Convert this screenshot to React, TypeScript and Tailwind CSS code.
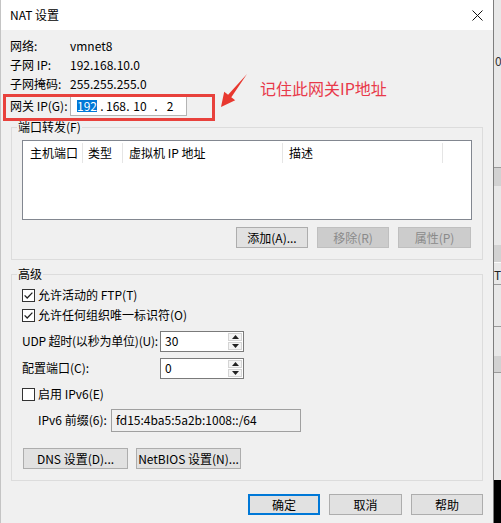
import React from 'react';

function CheckBox({ checked }: { checked?: boolean }) {
  return (
    <svg width="13" height="13" viewBox="0 0 13 13" className="shrink-0">
      <rect x="0.5" y="0.5" width="12" height="12" fill="#fff" stroke="#333" />
      {checked && <path d="M2.6 6.4 L5.2 9 L10.4 3.6" fill="none" stroke="#222" strokeWidth="1.3" />}
    </svg>
  );
}

function WinButton({ label, w, disabled, primary }: { label: string; w: string; disabled?: boolean; primary?: boolean }) {
  const base = 'h-[21px] flex items-center justify-center shrink-0 border whitespace-nowrap';
  const look = disabled
    ? 'bg-[#cccccc] border-[#bfbfbf] text-[#8a8a8a]'
    : primary
      ? 'bg-[#e1e1e1] border-[#0078d7] shadow-[inset_0_0_0_1px_#0078d7]'
      : 'bg-[#e1e1e1] border-[#adadad]';
  return <div className={`${base} ${look} ${w}`}>{label}</div>;
}

function SpinBox({ value }: { value: string }) {
  return (
    <div className="w-[84px] h-[21px] shrink-0 bg-white border border-[#7a7a7a] flex items-stretch">
      <div className="flex-1 pl-[4px] flex items-center">{value}</div>
      <div className="w-[14px] mr-[1px] py-[1px] flex flex-col gap-[1px]">
        <div className="flex-1 border border-[#d4d4d4] bg-[#f4f4f4] flex items-center justify-center">
          <svg width="7" height="4" viewBox="0 0 7 4"><path d="M0 4 L3.5 0 L7 4Z" fill="#222" /></svg>
        </div>
        <div className="flex-1 border border-[#d4d4d4] bg-[#f4f4f4] flex items-center justify-center">
          <svg width="7" height="4" viewBox="0 0 7 4"><path d="M0 0 L3.5 4 L7 0Z" fill="#222" /></svg>
        </div>
      </div>
    </div>
  );
}

function InfoRow({ label, value }: { label: string; value: string }) {
  return (
    <div className="h-[19px] flex items-center">
      <div className="w-[60px]">{label}</div>
      <div>{value}</div>
    </div>
  );
}

export default function App() {
  return (
    <div className="w-[501px] h-[523px] flex overflow-hidden bg-[#f0f0f0] text-black text-[12px] leading-[16px] font-['Noto_Sans_CJK_SC',sans-serif]">
      <div className="w-[493px] h-full flex flex-col border-l border-[#c4c4c4]">
        {/* title bar */}
        <div className="h-[30px] bg-white flex items-center justify-between pl-[9px] pr-[10px] shrink-0">
          <div>NAT 设置</div>
          <svg width="11" height="11" viewBox="0 0 11 11">
            <path d="M0.5 0.5 L10.5 10.5 M10.5 0.5 L0.5 10.5" stroke="#111" strokeWidth="1" />
          </svg>
        </div>

        <div className="pt-[6px] pl-[9px] flex flex-col">
          <InfoRow label="网络:" value="vmnet8" />
          <InfoRow label="子网 IP:" value="192.168.10.0" />
          <InfoRow label="子网掩码:" value="255.255.255.0" />

          {/* gateway row */}
          <div className="h-[26px] flex items-center relative">
            <div className="w-[60px] whitespace-nowrap">网关 IP(G):</div>
            <div className="w-[117px] h-[20px] bg-white border border-[#b4b4b4] flex items-center pl-[6px]">
              <span className="w-[20px] text-center bg-[#0078d7] text-white leading-[12px]">192</span>
              <span className="ml-[2px] w-[6px] text-center">.</span>
              <span className="ml-[1px] w-[16px] text-center">168</span>
              <span className="ml-[3px] w-[6px] text-center">.</span>
              <span className="ml-[1px] w-[16px] text-center">10</span>
              <span className="ml-[5px] w-[6px] text-center">.</span>
              <span className="ml-[5px] w-[12px] text-center">2</span>
            </div>
            {/* annotation overlays */}
            <div className="absolute left-[-7px] top-[1px] w-[212px] h-[27px] border-[3px] border-[#e8413c] pointer-events-none" />
            <svg className="absolute left-[205px] top-[-25px]" width="40" height="42" viewBox="0 0 40 42">
              <polygon points="32,6 16.3,29.2 20.2,32.3 6,39 9.2,23.7 13.1,26.8" fill="#e8382f" />
            </svg>
            <div className="absolute left-[250px] top-[-14px] text-[16px] leading-[18px] text-[#e8394a] whitespace-nowrap">
              记住此网关IP地址
            </div>
          </div>

          {/* port forwarding */}
          <fieldset className="ml-[1px] w-[472px] border border-[#dcdcdc] pb-[11px]">
            <legend className="ml-[5px] px-[1px]">端口转发(F)</legend>
            <div className="mt-[5px] ml-[10px] w-[450px] h-[80px] bg-white border border-[#828790]">
              <div className="h-[24px] flex items-stretch">
                <div className="w-[60px] pl-[7px] flex items-center border-r border-[#e5e5e5] my-[2px]">主机端口</div>
                <div className="w-[40px] pl-[5px] flex items-center border-r border-[#e5e5e5] my-[2px]">类型</div>
                <div className="w-[160px] pl-[6px] flex items-center border-r border-[#e5e5e5] my-[2px]">虚拟机 IP 地址</div>
                <div className="w-[160px] pl-[6px] flex items-center border-r border-[#e5e5e5] my-[2px]">描述</div>
              </div>
            </div>
            <div className="mt-[7px] flex justify-end gap-[9px] pr-[11px]">
              <WinButton label="添加(A)..." w="w-[72px]" />
              <WinButton label="移除(R)" w="w-[72px]" disabled />
              <WinButton label="属性(P)" w="w-[73px]" disabled />
            </div>
          </fieldset>

          {/* advanced */}
          <fieldset className="mt-[6px] ml-[1px] w-[472px] border border-[#dcdcdc] pb-[11px] pl-[10px]">
            <legend className="ml-[-5px] px-[1px]">高级</legend>
            <div className="mt-[3px] h-[20px] flex items-center gap-[3px]">
              <CheckBox checked />
              <span>允许活动的 FTP(T)</span>
            </div>
            <div className="h-[20px] flex items-center gap-[3px]">
              <CheckBox checked />
              <span>允许任何组织唯一标识符(O)</span>
            </div>
            <div className="mt-[5px] h-[22px] flex items-center">
              <div className="w-[138px] shrink-0 whitespace-nowrap tracking-[-0.2px]">UDP 超时(以秒为单位)(U):</div>
              <SpinBox value="30" />
            </div>
            <div className="mt-[5px] h-[22px] flex items-center">
              <div className="w-[138px] shrink-0 whitespace-nowrap">配置端口(C):</div>
              <SpinBox value="0" />
            </div>
            <div className="mt-[5px] h-[20px] flex items-center gap-[3px]">
              <CheckBox />
              <span>启用 IPv6(E)</span>
            </div>
            <div className="mt-[5px] h-[22px] flex items-center pl-[16px]">
              <div className="w-[73px] shrink-0 whitespace-nowrap">IPv6 前缀(6):</div>
              <div className="w-[190px] h-[23px] border border-[#a0a0a0] flex items-center pl-[4px]">
                fd15:4ba5:5a2b:1008::/64
              </div>
            </div>
            <div className="mt-[17px] flex gap-[8px] pl-[1px]">
              <WinButton label="DNS 设置(D)..." w="w-[105px]" />
              <WinButton label="NetBIOS 设置(N)..." w="w-[105px]" />
            </div>
          </fieldset>

          {/* dialog buttons */}
          <div className="mt-[13px] flex justify-end gap-[9px] w-[473px]">
            <WinButton label="确定" w="w-[72px]" primary />
            <WinButton label="取消" w="w-[73px]" />
            <WinButton label="帮助" w="w-[72px]" />
          </div>
        </div>
      </div>

      {/* window behind, visible at the right edge */}
      <div className="w-[8px] h-full border-l border-[#7d7d7d] bg-[#e8e8e8] flex flex-col">
        <div className="mt-[55px] h-[12px] text-[12px] leading-[12px] text-[#333] pl-[1px]">0</div>
        <div className="mt-[100px] h-[1px] bg-[#9a9a9a]" />
        <div className="h-[18px] bg-[#d2d2d2]" />
        <div className="mt-[59px] h-[17px] bg-[#d2d2d2]" />
        <div className="h-[1px] bg-[#fafafa]" />
        <div className="mt-[5px] h-[14px] text-[12px] leading-[14px] text-[#222]">T</div>
        <div className="mt-[2px] h-[1px] bg-[#9a9a9a]" />
        <div className="mt-[41px] h-[1px] bg-[#9a9a9a]" />
        <div className="mt-[29px] h-[16px] bg-[#d2d2d2]" />
        <div className="h-[1px] bg-[#9a9a9a]" />
        <div className="flex-1" />
        <div className="h-[43px] bg-black" />
      </div>
    </div>
  );
}
